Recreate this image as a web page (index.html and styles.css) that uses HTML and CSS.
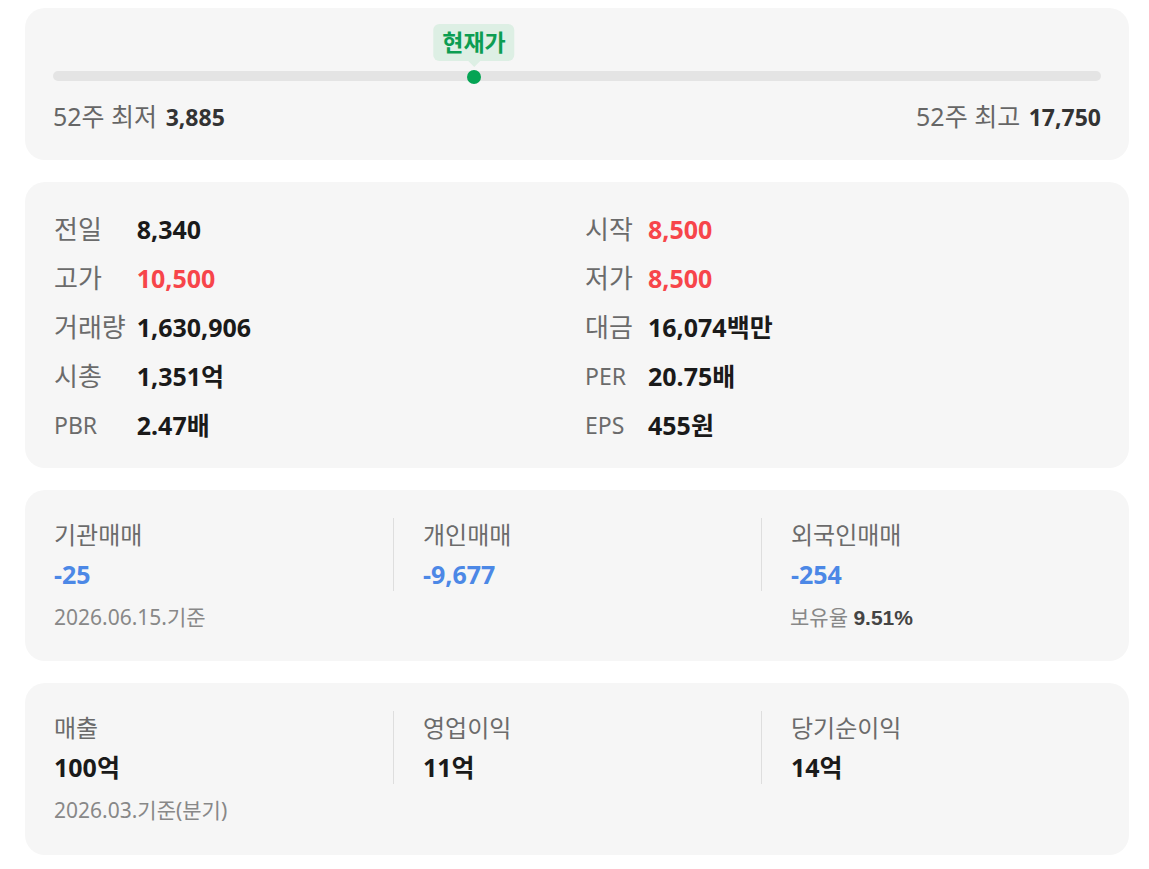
FILE: index.html
```html
<!DOCTYPE html>
<html lang="ko">
<head>
<meta charset="utf-8">
<title>종목 정보</title>
<link rel="stylesheet" href="styles.css">
</head>
<body>
<main class="page">
  <section class="card card-range">
    <div class="slider">
      <div class="track">
        <div class="marker" style="left: 40.17%;">
          <span class="tooltip">현재가</span>
          <span class="dot"></span>
        </div>
      </div>
    </div>
    <div class="range-row">
      <span class="range-item"><span class="range-label">52주 최저</span> <b class="range-value">3,885</b></span>
      <span class="range-item"><span class="range-label">52주 최고</span> <b class="range-value">17,750</b></span>
    </div>
  </section>

  <section class="card card-quote">
    <dl class="quote-col">
      <dt>전일</dt><dd>8,340</dd>
      <dt>고가</dt><dd class="up">10,500</dd>
      <dt>거래량</dt><dd>1,630,906</dd>
      <dt>시총</dt><dd>1,351억</dd>
      <dt class="en">PBR</dt><dd>2.47배</dd>
    </dl>
    <dl class="quote-col">
      <dt>시작</dt><dd class="up">8,500</dd>
      <dt>저가</dt><dd class="up">8,500</dd>
      <dt>대금</dt><dd>16,074백만</dd>
      <dt class="en">PER</dt><dd>20.75배</dd>
      <dt class="en">EPS</dt><dd>455원</dd>
    </dl>
  </section>

  <section class="card card-stats">
    <div class="stat">
      <div class="stat-label">기관매매</div>
      <div class="stat-value down">-25</div>
    </div>
    <div class="stat">
      <div class="stat-label">개인매매</div>
      <div class="stat-value down">-9,677</div>
    </div>
    <div class="stat">
      <div class="stat-label">외국인매매</div>
      <div class="stat-value down">-254</div>
    </div>
    <div class="stat-sub">2026.06.15.기준</div>
    <div class="stat-sub"></div>
    <div class="stat-sub">보유율 <b class="hold">9.51%</b></div>
  </section>

  <section class="card card-stats card-last">
    <div class="stat">
      <div class="stat-label">매출</div>
      <div class="stat-value">100억</div>
    </div>
    <div class="stat">
      <div class="stat-label">영업이익</div>
      <div class="stat-value">11억</div>
    </div>
    <div class="stat">
      <div class="stat-label">당기순이익</div>
      <div class="stat-value">14억</div>
    </div>
    <div class="stat-sub">2026.03.기준(분기)</div>
    <div class="stat-sub"></div>
    <div class="stat-sub"></div>
  </section>
</main>
</body>
</html>
```

FILE: styles.css
```css
* { box-sizing: border-box; }

html, body {
  margin: 0;
  padding: 0;
  background: #ffffff;
}

body {
  font-family: "Noto Sans", "Noto Sans CJK KR", sans-serif;
  color: #1a1a1a;
}

.page {
  display: flex;
  flex-direction: column;
  gap: 22px;
  padding: 8px 20px 0 25px;
}

.card {
  background: #f6f6f6;
  border-radius: 20px;
}

/* ---------- 52-week range ---------- */
.card-range {
  padding: 63px 28px 28px;
}

.track {
  position: relative;
  height: 10px;
  border-radius: 5px;
  background: #e4e4e4;
}

.marker {
  position: absolute;
  top: 50%;
  width: 0;
  height: 0;
}

.dot {
  position: absolute;
  left: -7px;
  top: -6px;
  width: 14px;
  height: 14px;
  border-radius: 50%;
  background: #05a454;
}

.tooltip {
  position: absolute;
  bottom: 15px;
  left: 0;
  transform: translateX(-50%);
  white-space: nowrap;
  padding: 0 9px;
  height: 37px;
  line-height: 36px;
  border-radius: 6px;
  background: #ddefe4;
  color: #0c9d52;
  font-size: 23px;
  font-weight: 700;
}

.tooltip::after {
  content: "";
  position: absolute;
  left: 50%;
  top: 100%;
  margin-left: -6px;
  border-left: 6px solid transparent;
  border-right: 6px solid transparent;
  border-top: 6px solid #ddefe4;
}

.range-row {
  display: flex;
  justify-content: space-between;
  margin-top: 19px;
  height: 32px;
  line-height: 32px;
  font-size: 25px;
}

.range-item {
  white-space: nowrap;
}

.range-label,
.range-value {
  line-height: 1;
}

.range-label { color: #666666; font-size: 25px; }
.range-value { color: #333333; font-weight: 700; font-size: 23px; margin-left: 2px; }

/* ---------- quote grid ---------- */
.card-quote {
  display: grid;
  grid-template-columns: 1fr 1fr;
  column-gap: 16px;
  padding: 23px 29px 18px;
}

.quote-col {
  display: grid;
  grid-template-columns: minmax(52px, auto) 1fr;
  column-gap: 11px;
  margin: 0;
  line-height: 49px;
}

.quote-col dt {
  color: #6b6b6b;
  white-space: nowrap;
  font-size: 26px;
}

.quote-col dt.en { font-size: 23px; }

.quote-col dd {
  margin: 0;
  font-size: 25px;
  font-weight: 700;
  color: #1a1a1a;
}

.quote-col dd.up { color: #f7454a; }

/* ---------- stats ---------- */
.card-stats {
  display: grid;
  grid-template-columns: repeat(3, 1fr);
  padding: 28px 0 28px;
}

.card-last { padding-bottom: 30px; }

.stat {
  padding: 0 29px;
}

.stat + .stat {
  border-left: 1px solid #dedede;
}

.stat-label {
  font-size: 24px;
  line-height: 34px;
  color: #6b6b6b;
}

.stat-value {
  margin-top: 5px;
  font-size: 25px;
  line-height: 34px;
  font-weight: 700;
  color: #1a1a1a;
}

.stat-value.down { color: #4c88e6; }

.stat-sub {
  margin-top: 11px;
  padding: 0 29px;
  font-size: 21px;
  line-height: 30px;
  color: #888888;
}

.hold {
  font-family: "Liberation Sans", "Noto Sans CJK KR", sans-serif;
  font-weight: 700;
  color: #444444;
}
```
